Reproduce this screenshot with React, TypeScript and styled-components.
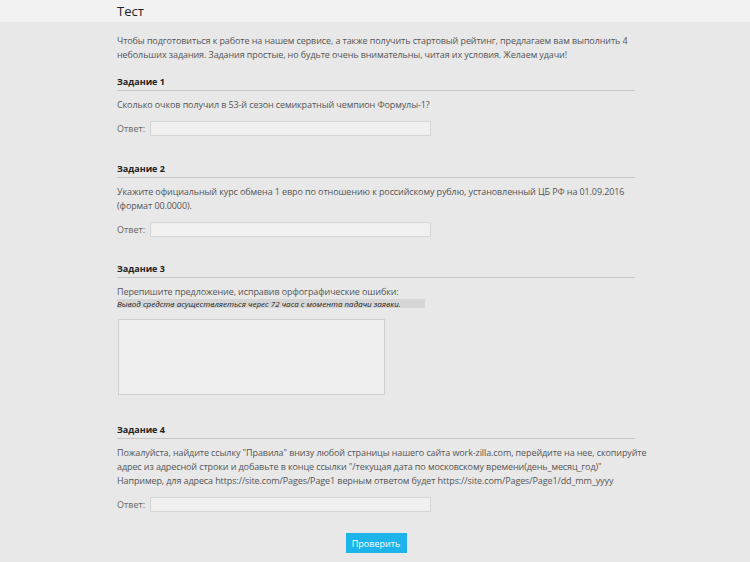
import React from "react";
import styled, { createGlobalStyle } from "styled-components";

const GlobalStyle = createGlobalStyle`
  html, body {
    margin: 0;
    padding: 0;
    background: #e8e8e8;
    font-family: "Open Sans", "Noto Sans", sans-serif;
  }
`;

const Page = styled.div`
  width: 750px;
  min-height: 562px;
  background: #e8e8e8;
`;

const TopBar = styled.div`
  height: 22px;
  background: #f2f2f2;
  display: flex;
  align-items: center;
  padding-left: 117px;
`;

const Title = styled.h1`
  margin: 0;
  font-size: 13px;
  font-weight: 400;
  color: #222;
`;

const Content = styled.div`
  width: 518px;
  margin-left: 117px;
  padding-top: 12px;
  display: flex;
  flex-direction: column;
`;

const Text = styled.p`
  margin: 0;
  font-size: 9px;
  line-height: 14px;
  letter-spacing: -0.1px;
  color: #555;
  white-space: nowrap;
`;

const Task = styled.section<{ $gap?: number }>`
  margin-top: ${(p) => p.$gap ?? 26}px;
`;

const TaskTitle = styled.h2`
  margin: 0;
  font-size: 9px;
  font-weight: 700;
  color: #222;
  line-height: 14px;
  padding-bottom: 1px;
  border-bottom: 1px solid #c6c6c6;
`;

const TaskBody = styled.div`
  padding-top: 7px;
`;

const AnswerRow = styled.label`
  display: flex;
  align-items: center;
  margin-top: 9px;
  font-size: 9px;
  color: #666;
`;

const AnswerLabel = styled.span`
  width: 33px;
`;

const Input = styled.input`
  width: 281px;
  height: 15px;
  box-sizing: border-box;
  border: 1px solid #d6d6d6;
  background: #f0f0f0;
  padding: 0 4px;
  font-family: inherit;
  font-size: 9px;
  outline: none;
`;

const Sample = styled.span`
  display: block;
  width: 308px;
  background: #d6d6d6;
  color: #222;
  font-style: italic;
  font-size: 8px;
  line-height: 9px;
  white-space: nowrap;
`;

const Area = styled.textarea`
  display: block;
  width: 267px;
  height: 76px;
  box-sizing: border-box;
  margin: 11px 0 0 1px;
  border: 1px solid #cfcfcf;
  background: #efefef;
  resize: none;
  outline: none;
`;

const Footer = styled.div`
  display: flex;
  justify-content: center;
  margin-top: 21px;
  padding-bottom: 8px;
`;

const Button = styled.button`
  height: 20px;
  width: 61px;
  padding: 0;
  border: none;
  background: #1cb4ea;
  color: #fff;
  font-family: inherit;
  font-size: 9px;
  cursor: pointer;
`;

function Answer() {
  return (
    <AnswerRow>
      <AnswerLabel>Ответ:</AnswerLabel>
      <Input type="text" />
    </AnswerRow>
  );
}

export default function App() {
  return (
    <Page>
      <GlobalStyle />
      <TopBar>
        <Title>Тест</Title>
      </TopBar>
      <Content>
        <Text>
          Чтобы подготовиться к работе на нашем сервисе, а также получить стартовый рейтинг,
          предлагаем вам выполнить 4
          <br />
          небольших задания. Задания простые, но будьте очень внимательны, читая их условия.
          Желаем удачи!
        </Text>
        <Task $gap={13}>
          <TaskTitle>Задание 1</TaskTitle>
          <TaskBody>
            <Text>Сколько очков получил в 53-й сезон семикратный чемпион Формулы-1?</Text>
            <Answer />
          </TaskBody>
        </Task>
        <Task>
          <TaskTitle>Задание 2</TaskTitle>
          <TaskBody>
            <Text>
              Укажите официальный курс обмена 1 евро по отношению к российскому рублю,
              установленный ЦБ РФ на 01.09.2016
              <br />
              (формат 00.0000).
            </Text>
            <Answer />
          </TaskBody>
        </Task>
        <Task $gap={25}>
          <TaskTitle>Задание 3</TaskTitle>
          <TaskBody>
            <Text>Перепишите предложение, исправив орфографические ошибки:</Text>
            <Sample>Вывод средств асуществляеться черес 72 часа с момента падачи заявки.</Sample>
            <Area />
          </TaskBody>
        </Task>
        <Task $gap={28}>
          <TaskTitle>Задание 4</TaskTitle>
          <TaskBody>
            <Text>
              Пожалуйста, найдите ссылку "Правила" внизу любой страницы нашего сайта
              work-zilla.com, перейдите на нее, скопируйте
              <br />
              адрес из адресной строки и добавьте в конце ссылки "/текущая дата по московскому
              времени(день_месяц_год)"
              <br />
              Например, для адреса https://site.com/Pages/Page1 верным ответом будет
              https://site.com/Pages/Page1/dd_mm_yyyy
            </Text>
            <Answer />
          </TaskBody>
        </Task>
        <Footer>
          <Button>Проверить</Button>
        </Footer>
      </Content>
    </Page>
  );
}
